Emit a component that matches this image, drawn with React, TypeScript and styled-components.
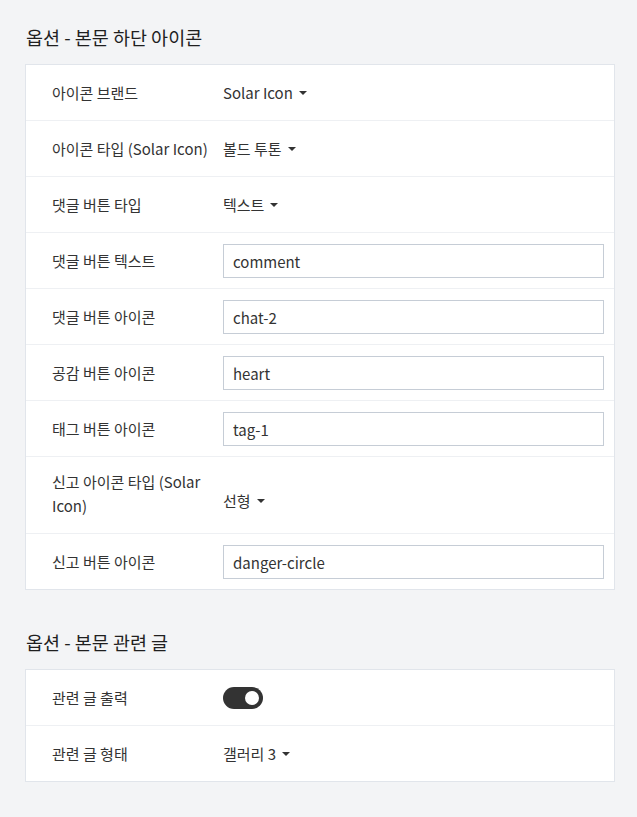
import React from 'react'
import styled, { createGlobalStyle } from 'styled-components'

const GlobalStyle = createGlobalStyle`
  body {
    margin: 0;
    background: #f3f4f6;
    font-family: "Noto Sans CJK KR", "Noto Sans", sans-serif;
    color: #333;
  }
`

// 페이지 전체
const Page = styled.div`
  width: 590px;
  padding: 23px 0 36px 25px;
`

// 섹션 제목
const SectionTitle = styled.h2<{ $first?: boolean }>`
  margin: ${(p) => (p.$first ? '0' : '38px')} 0 13px 1px;
  font-size: 18.5px;
  line-height: 28px;
  font-weight: 400;
  color: #1f1f1f;
`

// 카드
const Card = styled.div`
  background: #fff;
  border: 1px solid #e1e5eb;
`

// 옵션 한 줄
const Row = styled.div<{ $tall?: boolean }>`
  display: grid;
  grid-template-columns: 171px 1fr;
  align-items: ${(p) => (p.$tall ? 'end' : 'center')};
  padding: ${(p) => (p.$tall ? '13px 10px 15px 26px' : '11px 10px 10px 26px')};
  & + & {
    border-top: 1px solid #eef0f3;
  }
`

const Label = styled.div`
  font-size: 15px;
  line-height: 24px;
  color: #333;
  padding-right: 8px;
`

const Value = styled.div`
  display: flex;
  align-items: center;
  height: 34px;
`

// 드롭다운
const Dropdown = styled.button`
  display: inline-flex;
  align-items: center;
  gap: 6px;
  border: none;
  background: none;
  padding: 0;
  font: inherit;
  font-size: 15px;
  line-height: 24px;
  color: #333;
  cursor: pointer;
  &::after {
    content: '';
    border-left: 4px solid transparent;
    border-right: 4px solid transparent;
    border-top: 4px solid #333;
  }
`

const TextInput = styled.input`
  box-sizing: border-box;
  width: 100%;
  height: 34px;
  padding: 0 9px;
  border: 1px solid #c6cdd6;
  border-radius: 0;
  font: inherit;
  font-size: 15px;
  color: #333;
  outline: none;
`

// 토글 스위치
const Toggle = styled.span<{ $on?: boolean }>`
  position: relative;
  display: inline-block;
  width: 40px;
  height: 22px;
  border-radius: 11px;
  background: ${(p) => (p.$on ? '#333' : '#ccc')};
  &::after {
    content: '';
    position: absolute;
    top: 4px;
    left: ${(p) => (p.$on ? '22px' : '4px')};
    width: 14px;
    height: 14px;
    border-radius: 50%;
    background: #fff;
  }
`

type Option =
  | { label: string; kind: 'select'; value: string; tall?: boolean }
  | { label: string; kind: 'input'; value: string }
  | { label: string; kind: 'toggle'; value: boolean }

const iconOptions: Option[] = [
  { label: '아이콘 브랜드', kind: 'select', value: 'Solar Icon' },
  { label: '아이콘 타입 (Solar Icon)', kind: 'select', value: '볼드 투톤' },
  { label: '댓글 버튼 타입', kind: 'select', value: '텍스트' },
  { label: '댓글 버튼 텍스트', kind: 'input', value: 'comment' },
  { label: '댓글 버튼 아이콘', kind: 'input', value: 'chat-2' },
  { label: '공감 버튼 아이콘', kind: 'input', value: 'heart' },
  { label: '태그 버튼 아이콘', kind: 'input', value: 'tag-1' },
  { label: '신고 아이콘 타입 (Solar Icon)', kind: 'select', value: '선형', tall: true },
  { label: '신고 버튼 아이콘', kind: 'input', value: 'danger-circle' },
]

const relatedOptions: Option[] = [
  { label: '관련 글 출력', kind: 'toggle', value: true },
  { label: '관련 글 형태', kind: 'select', value: '갤러리 3' },
]

const OptionRow = ({ option }: { option: Option }) => (
  <Row $tall={option.kind === 'select' && option.tall}>
    <Label>{option.label}</Label>
    <Value>
      {option.kind === 'select' && <Dropdown type="button">{option.value}</Dropdown>}
      {option.kind === 'input' && <TextInput defaultValue={option.value} />}
      {option.kind === 'toggle' && <Toggle $on={option.value} />}
    </Value>
  </Row>
)

const App = () => (
  <>
    <GlobalStyle />
    <Page>
      <SectionTitle $first>옵션 - 본문 하단 아이콘</SectionTitle>
      <Card>
        {iconOptions.map((o) => (
          <OptionRow key={o.label} option={o} />
        ))}
      </Card>
      <SectionTitle>옵션 - 본문 관련 글</SectionTitle>
      <Card>
        {relatedOptions.map((o) => (
          <OptionRow key={o.label} option={o} />
        ))}
      </Card>
    </Page>
  </>
)

export default App
